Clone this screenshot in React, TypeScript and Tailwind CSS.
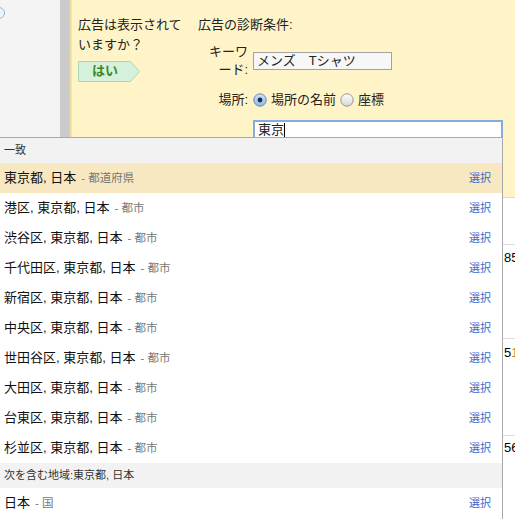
import React from "react";

const items: { name: string; kind: string }[] = [
  { name: "東京都, 日本", kind: "都道府県" },
  { name: "港区, 東京都, 日本", kind: "都市" },
  { name: "渋谷区, 東京都, 日本", kind: "都市" },
  { name: "千代田区, 東京都, 日本", kind: "都市" },
  { name: "新宿区, 東京都, 日本", kind: "都市" },
  { name: "中央区, 東京都, 日本", kind: "都市" },
  { name: "世田谷区, 東京都, 日本", kind: "都市" },
  { name: "大田区, 東京都, 日本", kind: "都市" },
  { name: "台東区, 東京都, 日本", kind: "都市" },
  { name: "杉並区, 東京都, 日本", kind: "都市" },
];

function Radio({ checked }: { checked: boolean }) {
  return (
    <svg width="14" height="14" viewBox="0 0 14 14" className="shrink-0">
      <defs>
        <linearGradient id={checked ? "rc" : "ru"} x1="0" y1="0" x2="0" y2="1">
          {checked ? (
            <>
              <stop offset="0" stopColor="#cfe3f7" />
              <stop offset="1" stopColor="#8fb8e6" />
            </>
          ) : (
            <>
              <stop offset="0" stopColor="#ffffff" />
              <stop offset="1" stopColor="#d6d6d6" />
            </>
          )}
        </linearGradient>
      </defs>
      <circle
        cx="7"
        cy="7"
        r="6.2"
        fill={checked ? "url(#rc)" : "url(#ru)"}
        stroke={checked ? "#5a7fae" : "#8c8c8c"}
        strokeWidth="0.9"
      />
      {checked && <circle cx="7" cy="7" r="2.4" fill="#1c2f4a" />}
    </svg>
  );
}

function Row({ name, kind, active, last }: { name: string; kind: string; active?: boolean; last?: boolean }) {
  return (
    <div
      className={`${last ? "h-[34px] pb-[4px]" : "h-[30px]"} flex items-center justify-between pl-[4px] pr-[11px] ${
        active ? "bg-[#f8e8c1]" : "bg-white"
      }`}
    >
      <div className="flex items-baseline">
        <span className="text-[13px] leading-[16px] text-[#111]">{name}</span>
        <span className="ml-[5px] text-[11.5px] leading-[14px] text-[#777]">- {kind}</span>
      </div>
      <span className="text-[11px] leading-[14px] text-[#3a6acb]">選択</span>
    </div>
  );
}

export default function App() {
  return (
    <div
      className="relative w-[515px] h-[519px] overflow-hidden bg-white"
      style={{ fontFamily: '"Liberation Sans", "Noto Sans CJK JP", sans-serif' }}
    >
      <div className="flex h-[519px]">
        <div className="w-[60px] bg-[#f4f4f4] relative shrink-0">
          <div className="absolute left-[-7px] top-[7px] w-[12px] h-[12px] rounded-full border border-[#9fb6c8] bg-[#eef3f7]" />
        </div>
        <div className="w-[10px] bg-[#cbcbcb] shrink-0" />
        <div className="flex-1 flex flex-col">
          <div className="h-[198px] bg-[#fff4c8] border-l-2 border-[#f3e2a6] flex pl-[6px] pt-[15px] text-[13px] text-[#222] border-b border-b-[#e8dcae]">
            <div className="w-[120px] shrink-0">
              <div className="leading-[20px]">広告は表示されて</div>
              <div className="leading-[20px]">いますか？</div>
              <div className="relative mt-[6px] w-[62px] h-[21px]">
                <svg width="62" height="21" viewBox="0 0 62 21" className="absolute inset-0">
                  <polygon
                    points="0.5,0.5 52.5,0.5 61.5,10.5 52.5,20.5 0.5,20.5"
                    fill="#d5f1db"
                    stroke="#a9d7b4"
                    strokeWidth="1"
                  />
                </svg>
                <span className="absolute left-[14px] top-[2px] text-[13px] leading-[16px] font-bold text-[#3f8a1f]">
                  はい
                </span>
              </div>
            </div>
            <div className="flex flex-col">
              <div className="leading-[20px]">広告の診断条件:</div>
              <div className="flex items-center mt-[8px]">
                <div className="w-[50px] text-right leading-[18px]">キーワード:</div>
                <div className="ml-[5px] w-[139px] h-[18px] border border-[#a2a2a2] bg-[#f7f7f7] pl-[3px] text-[13px] leading-[16px]">
                  メンズ　Tシャツ
                </div>
              </div>
              <div className="flex items-center mt-[12px] h-[18px]">
                <div className="w-[50px] text-right leading-[18px]">場所:</div>
                <div className="ml-[5px] flex items-center">
                  <Radio checked />
                  <span className="ml-[4px] leading-[18px]">場所の名前</span>
                  <span className="ml-[4px]">
                    <Radio checked={false} />
                  </span>
                  <span className="ml-[4px] leading-[18px]">座標</span>
                </div>
              </div>
              <div className="ml-[55px] mt-[11px] w-[250px] h-[19px] border-2 border-[#86acdf] bg-white pl-[3px] text-[13px] leading-[15px] flex items-center">
                <span>東京</span>
                <span className="w-px h-[14px] bg-black" />
              </div>
            </div>
          </div>
          <div className="flex-1 bg-white text-[13px] text-black">
            <div className="h-[47px] border-b border-[#dddddd]" />
            <div className="h-[94px] border-b border-[#dddddd] pl-[434px] pt-[5px] leading-[16px] whitespace-nowrap">851</div>
            <div className="h-[97px] border-b border-[#dddddd] pl-[434px] pt-[6px] leading-[16px] whitespace-nowrap">
              5<span className="text-[#c07a2a]">1</span>
            </div>
            <div className="pl-[434px] pt-[4px] leading-[16px] whitespace-nowrap">56</div>
          </div>
        </div>
      </div>

      <div className="absolute left-0 top-[137px] w-[503px] bg-white border-t border-r border-[#a9a9a9]">
        <div className="h-[25px] bg-[#f2f2f2] flex items-center pl-[4px] text-[11px] text-[#333]">一致</div>
        {items.map((it, i) => (
          <Row key={it.name} name={it.name} kind={it.kind} active={i === 0} />
        ))}
        <div className="h-[25px] bg-[#f2f2f2] flex items-center pl-[4px] text-[11px] text-[#333]">
          次を含む地域:東京都, 日本
        </div>
        <Row name="日本" kind="国" last />
      </div>
    </div>
  );
}
